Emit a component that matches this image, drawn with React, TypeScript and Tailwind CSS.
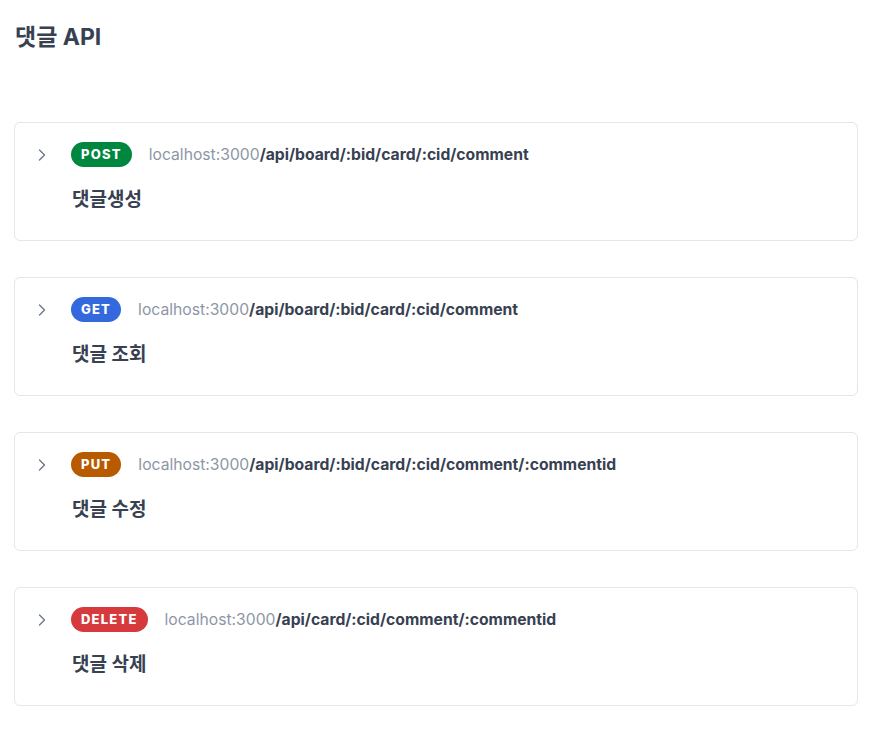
import React from 'react';
import { ChevronRight } from 'lucide-react';

const endpoints = [
  { method: 'POST', color: 'bg-[#00873f]', path: '/api/board/:bid/card/:cid/comment', desc: '댓글생성' },
  { method: 'GET', color: 'bg-[#3468dd]', path: '/api/board/:bid/card/:cid/comment', desc: '댓글 조회' },
  { method: 'PUT', color: 'bg-[#b85a00]', path: '/api/board/:bid/card/:cid/comment/:commentid', desc: '댓글 수정' },
  { method: 'DELETE', color: 'bg-[#d63a3d]', path: '/api/card/:cid/comment/:commentid', desc: '댓글 삭제' },
];

export default function App() {
  return (
    <div
      className="min-h-screen bg-white px-[14px] text-[#374151]"
      style={{ fontFamily: 'Inter, "Noto Sans CJK KR", sans-serif' }}
    >
      <h2 className="pt-[21px] text-[23px] font-bold leading-[32px] pl-[1px]">댓글 API</h2>
      <div className="mt-[69px] flex w-[844px] flex-col gap-[36px]">
        {endpoints.map((e) => (
          <div key={e.method} className="h-[119px] rounded-md border border-[#e3e6ea] pl-[17px] pt-[19px]">
            <div className="flex items-center">
              <ChevronRight className="h-[20px] w-[20px] text-[#6b7789]" strokeWidth={1.6} />
              <span
                className={`ml-[19px] flex h-[25px] items-center rounded-full px-[10px] text-[13px] font-extrabold tracking-[1.2px] text-white ${e.color}`}
              >
                {e.method}
              </span>
              <span className="ml-[17px] text-[15.7px]">
                <span className="text-[#8d96a6]">localhost:3000</span>
                <span className="font-bold text-[#374151]">{e.path}</span>
              </span>
            </div>
            <div className="ml-[40px] mt-[20px] text-[19px] font-bold leading-[26px]">{e.desc}</div>
          </div>
        ))}
      </div>
    </div>
  );
}
